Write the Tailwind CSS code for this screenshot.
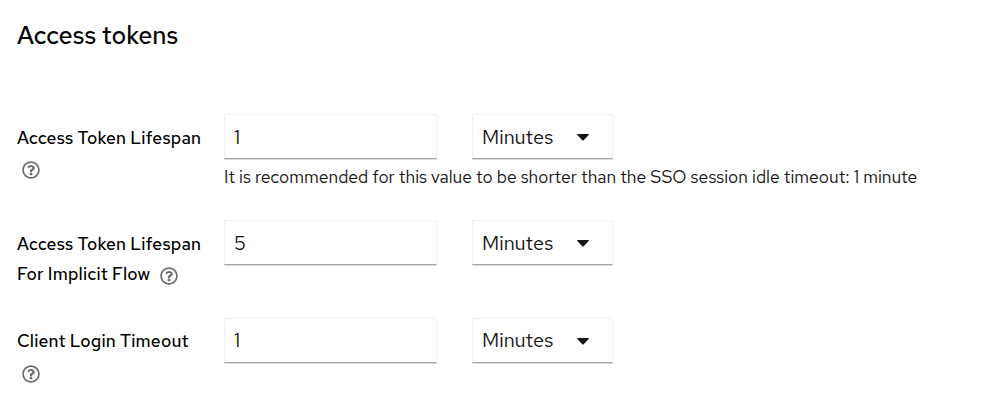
<!DOCTYPE html>
<html lang="en">
<head>
<meta charset="utf-8">
<title>Access tokens</title>
<script src="https://cdn.jsdelivr.net/npm/@tailwindcss/browser@4"></script>
</head>
<body class="h-[411px] overflow-hidden bg-white pl-[17px] font-['Red_Hat_Text','Inter',sans-serif] text-[#151515]">
<svg class="hidden">
  <symbol id="help" viewBox="0 0 512 512"><path d="M256 8C119.043 8 8 119.083 8 256c0 136.997 111.043 248 248 248s248-111.003 248-248C504 119.083 392.957 8 256 8zm0 448c-110.532 0-200-89.431-200-200 0-110.495 89.472-200 200-200 110.491 0 200 89.471 200 200 0 110.53-89.431 200-200 200zm107.244-255.2c0 67.052-72.421 68.084-72.421 92.863V300c0 6.627-5.373 12-12 12h-45.647c-6.627 0-12-5.373-12-12v-8.659c0-35.745 27.1-50.034 47.579-61.516 17.561-9.845 28.324-16.541 28.324-29.579 0-17.246-21.999-28.693-39.784-28.693-23.189 0-33.894 10.977-48.942 29.969-4.057 5.12-11.46 6.071-16.666 2.124l-27.824-21.098c-5.107-3.872-6.251-11.066-2.644-16.363C184.846 131.491 214.94 112 261.794 112c49.071 0 101.45 38.304 101.45 88.8zM298 368c0 23.159-18.841 42-42 42s-42-18.841-42-42 18.841-42 42-42 42 18.841 42 42z"/></symbol>
  <symbol id="caret" viewBox="0 0 12 7"><path d="M.7 0h10.6q1 .3.4 1L6.7 6.2q-.7.7-1.4 0L.3 1Q-.3.3.7 0z"/></symbol>
</svg>
<h1 class="h-[114px] pt-[21px] text-[25px] leading-[30px] font-medium text-black">Access tokens</h1>
<main>
  <section class="flex h-[106px]">
    <div class="w-[207px] pt-[9px] text-[17.5px] leading-[30px] font-medium tracking-[0.17px] text-black">
      <div class="whitespace-nowrap">Access Token Lifespan</div>
      <svg class="mt-[7.5px] ml-[4.5px] size-[18px] fill-[#6a6e73]"><use href="#help"/></svg>
    </div>
    <div>
      <div class="flex gap-[35px] text-[20px]">
        <div class="flex h-[45px] w-[213px] items-center border border-[#f0f0f0] border-b-[#a4a6a8] pt-px pl-[9px] shadow-[0_1px_0_#dedede]">1</div>
        <div class="flex h-[45px] w-[141px] items-center justify-between border border-[#f0f0f0] border-b-[#a4a6a8] pt-px pr-[23px] pl-[9px] shadow-[0_1px_0_#dedede]"><span>Minutes</span><svg class="h-[7px] w-[12px] fill-[#151515]"><use href="#caret"/></svg></div>
      </div>
      <p class="pt-[4px] text-[17.5px] leading-[28px] whitespace-nowrap">It is recommended for this value to be shorter than the SSO session idle timeout: 1 minute</p>
    </div>
  </section>
  <section class="flex h-[98px]">
    <div class="w-[207px] pt-[9px] text-[17.5px] leading-[30px] font-medium tracking-[0.17px] text-black">
      <div class="whitespace-nowrap">Access Token Lifespan</div>
      <div class="flex items-center whitespace-nowrap"><span class="w-[142.5px]">For Implicit Flow</span><svg class="mt-[3px] size-[18px] fill-[#6a6e73]"><use href="#help"/></svg></div>
    </div>
    <div class="flex gap-[35px] text-[20px]">
      <div class="flex h-[45px] w-[213px] items-center border border-[#f0f0f0] border-b-[#a4a6a8] pt-px pl-[9px] shadow-[0_1px_0_#dedede]">5</div>
      <div class="flex h-[45px] w-[141px] items-center justify-between border border-[#f0f0f0] border-b-[#a4a6a8] pt-px pr-[23px] pl-[9px] shadow-[0_1px_0_#dedede]"><span>Minutes</span><svg class="h-[7px] w-[12px] fill-[#151515]"><use href="#caret"/></svg></div>
    </div>
  </section>
  <section class="flex">
    <div class="w-[207px] pt-[8px] text-[17.5px] leading-[30px] font-medium tracking-[0.17px] text-black">
      <div class="whitespace-nowrap">Client Login Timeout</div>
      <svg class="mt-[8.5px] ml-[4.5px] size-[18px] fill-[#6a6e73]"><use href="#help"/></svg>
    </div>
    <div class="flex gap-[35px] text-[20px]">
      <div class="flex h-[45px] w-[213px] items-center border border-[#f0f0f0] border-b-[#a4a6a8] pb-px pl-[9px] shadow-[0_1px_0_#dedede]">1</div>
      <div class="flex h-[45px] w-[141px] items-center justify-between border border-[#f0f0f0] border-b-[#a4a6a8] pr-[23px] pl-[9px] shadow-[0_1px_0_#dedede]"><span class="pb-px">Minutes</span><svg class="mt-px h-[7px] w-[12px] fill-[#151515]"><use href="#caret"/></svg></div>
    </div>
  </section>
</main>
</body>
</html>
